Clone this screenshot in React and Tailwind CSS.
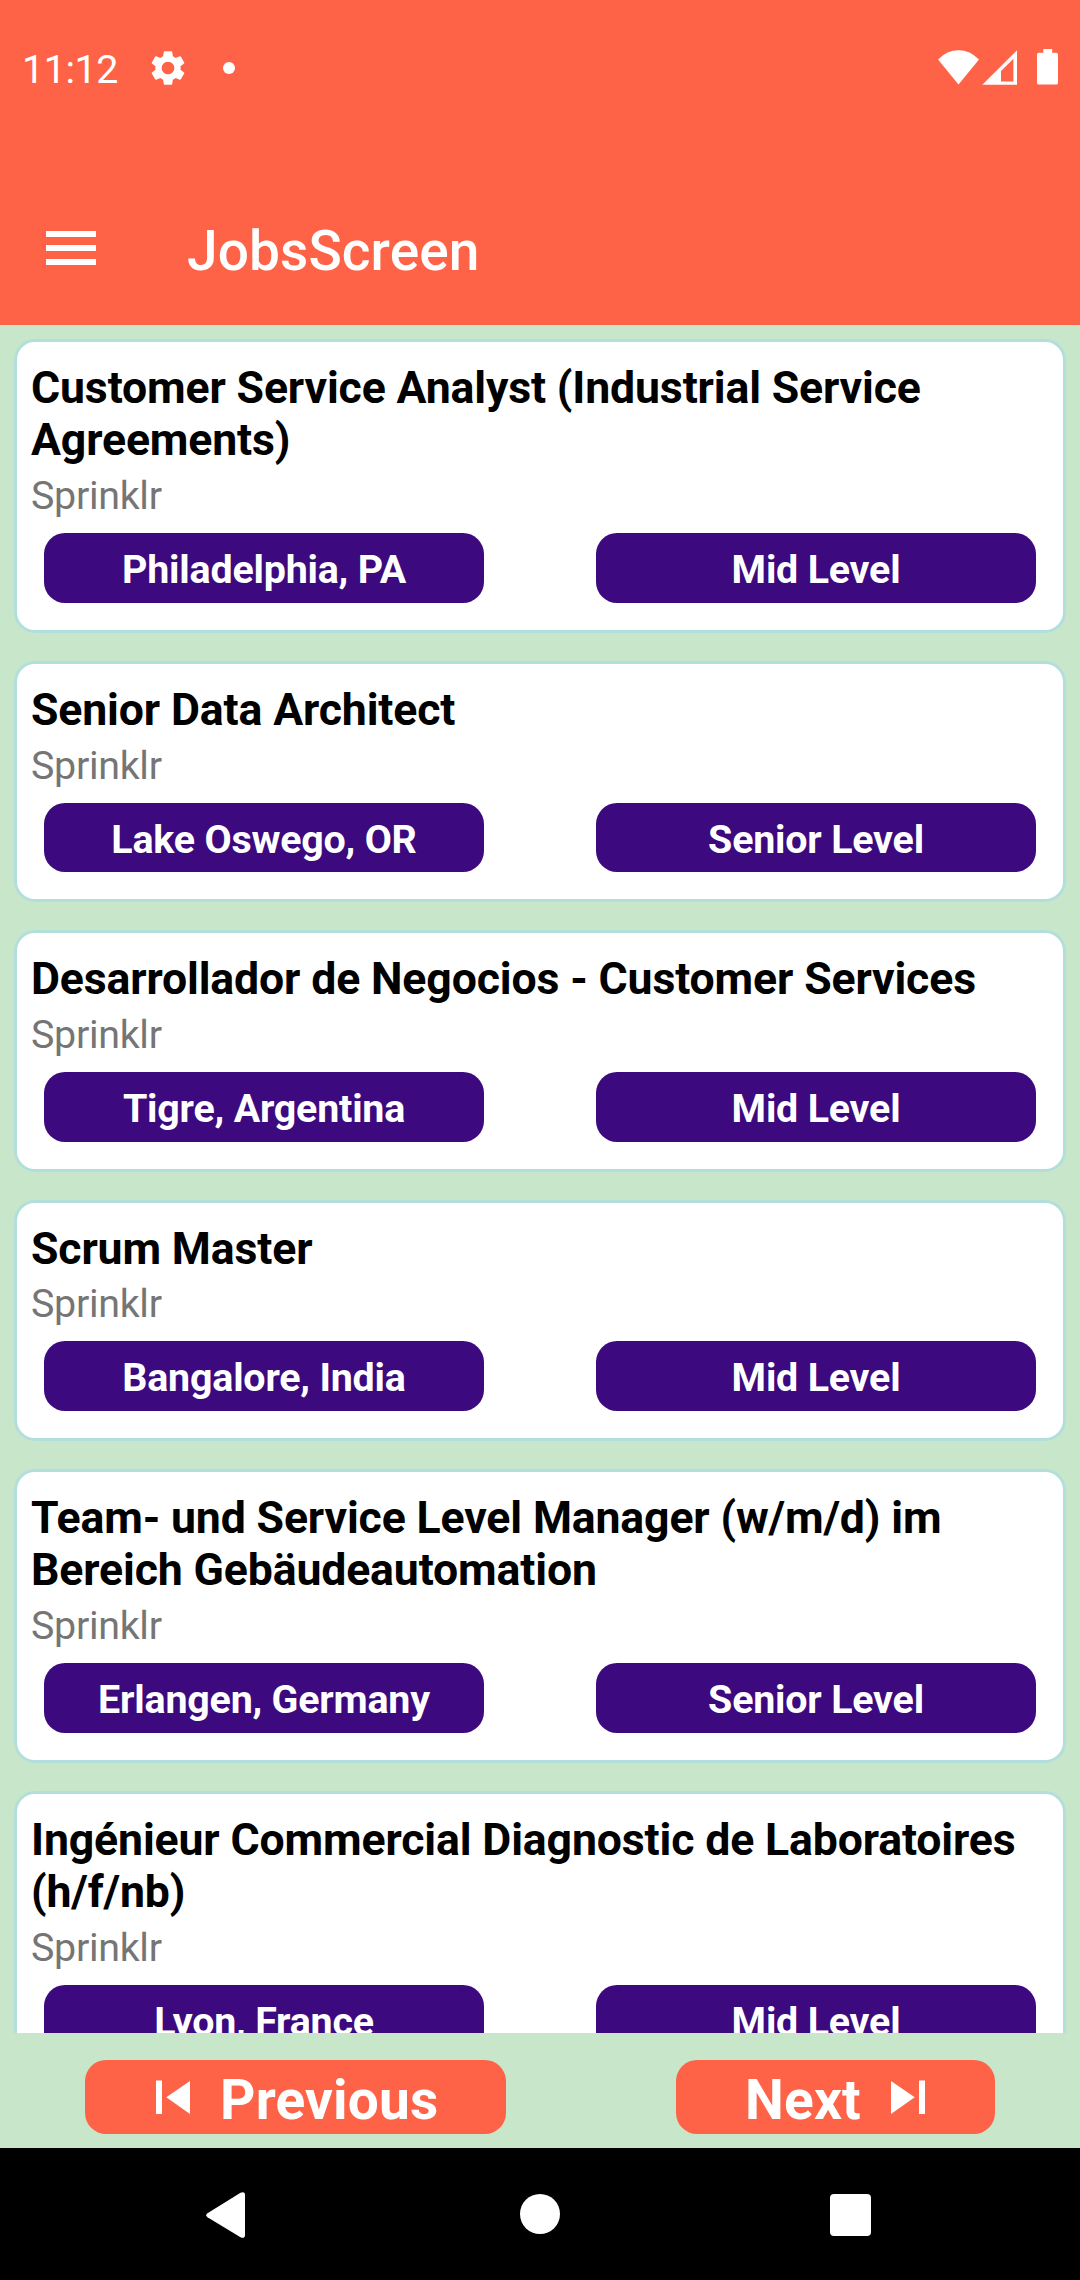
const jobs = [
  { title: "Customer Service Analyst (Industrial Service Agreements)", place: "Philadelphia, PA", level: "Mid Level" },
  { title: "Senior Data Architect", place: "Lake Oswego, OR", level: "Senior Level" },
  { title: "Desarrollador de Negocios - Customer Services", place: "Tigre, Argentina", level: "Mid Level" },
  { title: "Scrum Master", place: "Bangalore, India", level: "Mid Level" },
  { title: "Team- und Service Level Manager (w/m/d) im Bereich Gebäudeautomation", place: "Erlangen, Germany", level: "Senior Level" },
  { title: "Ingénieur Commercial Diagnostic de Laboratoires (h/f/nb)", place: "Lyon, France", level: "Mid Level" },
];

function StatusBar() {
  return (
    <div className="flex h-[136px] items-start justify-between pl-[22px] pr-[22px] text-white">
      <div className="flex items-center pt-[47px]">
        <span className="w-[125px] text-[39.4px] leading-[46px] tracking-[-0.4px]">11:12</span>
        <svg className="-mt-[5px] size-[42px]" viewBox="0 0 24 24" fill="currentColor">
          <path d="M19.14 12.94c.04-.3.06-.61.06-.94 0-.32-.02-.64-.07-.94l2.03-1.58c.18-.14.23-.41.12-.61l-1.92-3.32c-.12-.22-.37-.29-.59-.22l-2.39.96c-.5-.38-1.03-.7-1.62-.94l-.36-2.54c-.04-.24-.24-.41-.48-.41h-3.84c-.24 0-.43.17-.47.41l-.36 2.54c-.59.24-1.13.57-1.62.94l-2.39-.96c-.22-.08-.47 0-.59.22L2.74 8.87c-.12.21-.08.47.12.61l2.03 1.58c-.05.3-.09.63-.09.94s.02.64.07.94l-2.03 1.58c-.18.14-.23.41-.12.61l1.92 3.32c.12.22.37.29.59.22l2.39-.96c.5.38 1.03.7 1.62.94l.36 2.54c.05.24.24.41.48.41h3.84c.24 0 .44-.17.47-.41l.36-2.54c.59-.24 1.13-.56 1.62-.94l2.39.96c.22.08.47 0 .59-.22l1.92-3.32c.12-.22.07-.47-.12-.61l-2.01-1.58zM12 15.6c-1.98 0-3.6-1.62-3.6-3.6s1.62-3.6 3.6-3.6 3.6 1.62 3.6 3.6-1.62 3.6-3.6 3.6z" />
        </svg>
        <span className="-mt-[5px] ml-[34px] size-3 rounded-full bg-white" />
      </div>
      <svg className="mt-[48px] h-[38px] w-[120px]" viewBox="938 48 120 38" fill="currentColor">
        <path d="M938 59.5Q947 50.3 958.5 50.3T979 59.5L958.5 84.5Z" />
        <path fillRule="evenodd" d="M1017 50.3V84.8H982.3ZM1013.4 58.8L1001 71V81.4H1013.4Z" />
        <path d="M1043.3 49H1052.2V52.7H1056.3Q1058 52.7 1058 54.5V82.7Q1058 84.6 1056.3 84.6H1038.9Q1037 84.6 1037 82.7V54.5Q1037 52.7 1038.9 52.7H1043.3Z" />
      </svg>
    </div>
  );
}

function JobCard({ job }) {
  return (
    <article className="mb-[28px] rounded-[21px] border-[3px] border-[#b2dfdb] bg-white px-[14px] pt-[20px] pb-[27px]">
      <h2 className="text-[44.6px] font-bold leading-[52.4px] tracking-[-0.14px] text-black">{job.title}</h2>
      <p className="mt-[6.4px] text-[39.4px] leading-[46px] tracking-[-0.3px] text-[#757575]">Sprinklr</p>
      <div className="mt-[14.1px] flex justify-between px-[13px]">
        <span className="h-[69.5px] w-[440px] rounded-[21px] bg-[#3c0a7e] text-center text-[39.4px] font-bold leading-[73px] tracking-[-0.2px] text-white">{job.place}</span>
        <span className="h-[69.5px] w-[440px] rounded-[21px] bg-[#3c0a7e] text-center text-[39.4px] font-bold leading-[73px] tracking-[-0.2px] text-white">{job.level}</span>
      </div>
    </article>
  );
}

export default function App() {
  return (
    <div className="flex h-[2280px] w-[1080px] flex-col overflow-hidden bg-[#c8e6c9] font-['Roboto',sans-serif]">
      <header className="h-[325px] shrink-0 bg-[#ff6347]">
        <StatusBar />
        <div className="flex h-[189px] items-start pl-[46px] text-white">
          <div className="mt-[95px] flex h-[34px] w-[50px] flex-col justify-between">
            <span className="h-[6px] bg-white" />
            <span className="h-[6px] bg-white" />
            <span className="h-[6px] bg-white" />
          </div>
          <h1 className="ml-[91px] mt-[83px] text-[55px] font-medium leading-[64px] tracking-[0.1px]">JobsScreen</h1>
        </div>
      </header>

      <main className="h-[1708px] shrink-0 overflow-hidden px-[14px] pt-[14px]">
        {jobs.map((job) => (
          <JobCard key={job.title} job={job} />
        ))}
      </main>

      <div className="flex h-[115px] shrink-0 items-start justify-between px-[85px] pt-[27px] text-[55px] font-bold leading-[80px] text-white">
        <button className="flex h-[74px] w-[421px] items-start rounded-[21px] bg-[#ff6347] pl-[71px]">
          <svg className="mt-[20px] h-[34px] w-[34px]" viewBox="0 0 34 34" fill="currentColor">
            <path d="M0 .5H6V34H0ZM34 1V34L10.3 17.3Z" />
          </svg>
          <span className="ml-[30px] tracking-[0.2px]">Previous</span>
        </button>
        <button className="flex h-[74px] w-[319px] items-start rounded-[21px] bg-[#ff6347] pl-[69px]">
          <span className="w-[146px] text-left tracking-[0.2px]">Next</span>
          <svg className="mt-[20px] h-[34px] w-[34px]" viewBox="0 0 34 34" fill="currentColor">
            <path d="M28 .5H34V34H28ZM0 1V34L23.7 17.3Z" />
          </svg>
        </button>
      </div>

      <nav className="flex h-[132px] shrink-0 items-start bg-black pl-[206px] text-white">
        <svg className="mt-[44px] h-[46px] w-[39px]" viewBox="0 0 39 46" fill="currentColor">
          <path d="M1.5 21.2L34.5 .7Q39 -1 39 3V43Q39 47 34.5 45.3L1.5 25.2Q-1 23.2 1.5 21.2Z" />
        </svg>
        <span className="ml-[275px] mt-[46px] size-10 rounded-full bg-white" />
        <span className="ml-[270px] mt-[46px] h-[42px] w-[41px] rounded-[4px] bg-white" />
      </nav>
    </div>
  );
}
